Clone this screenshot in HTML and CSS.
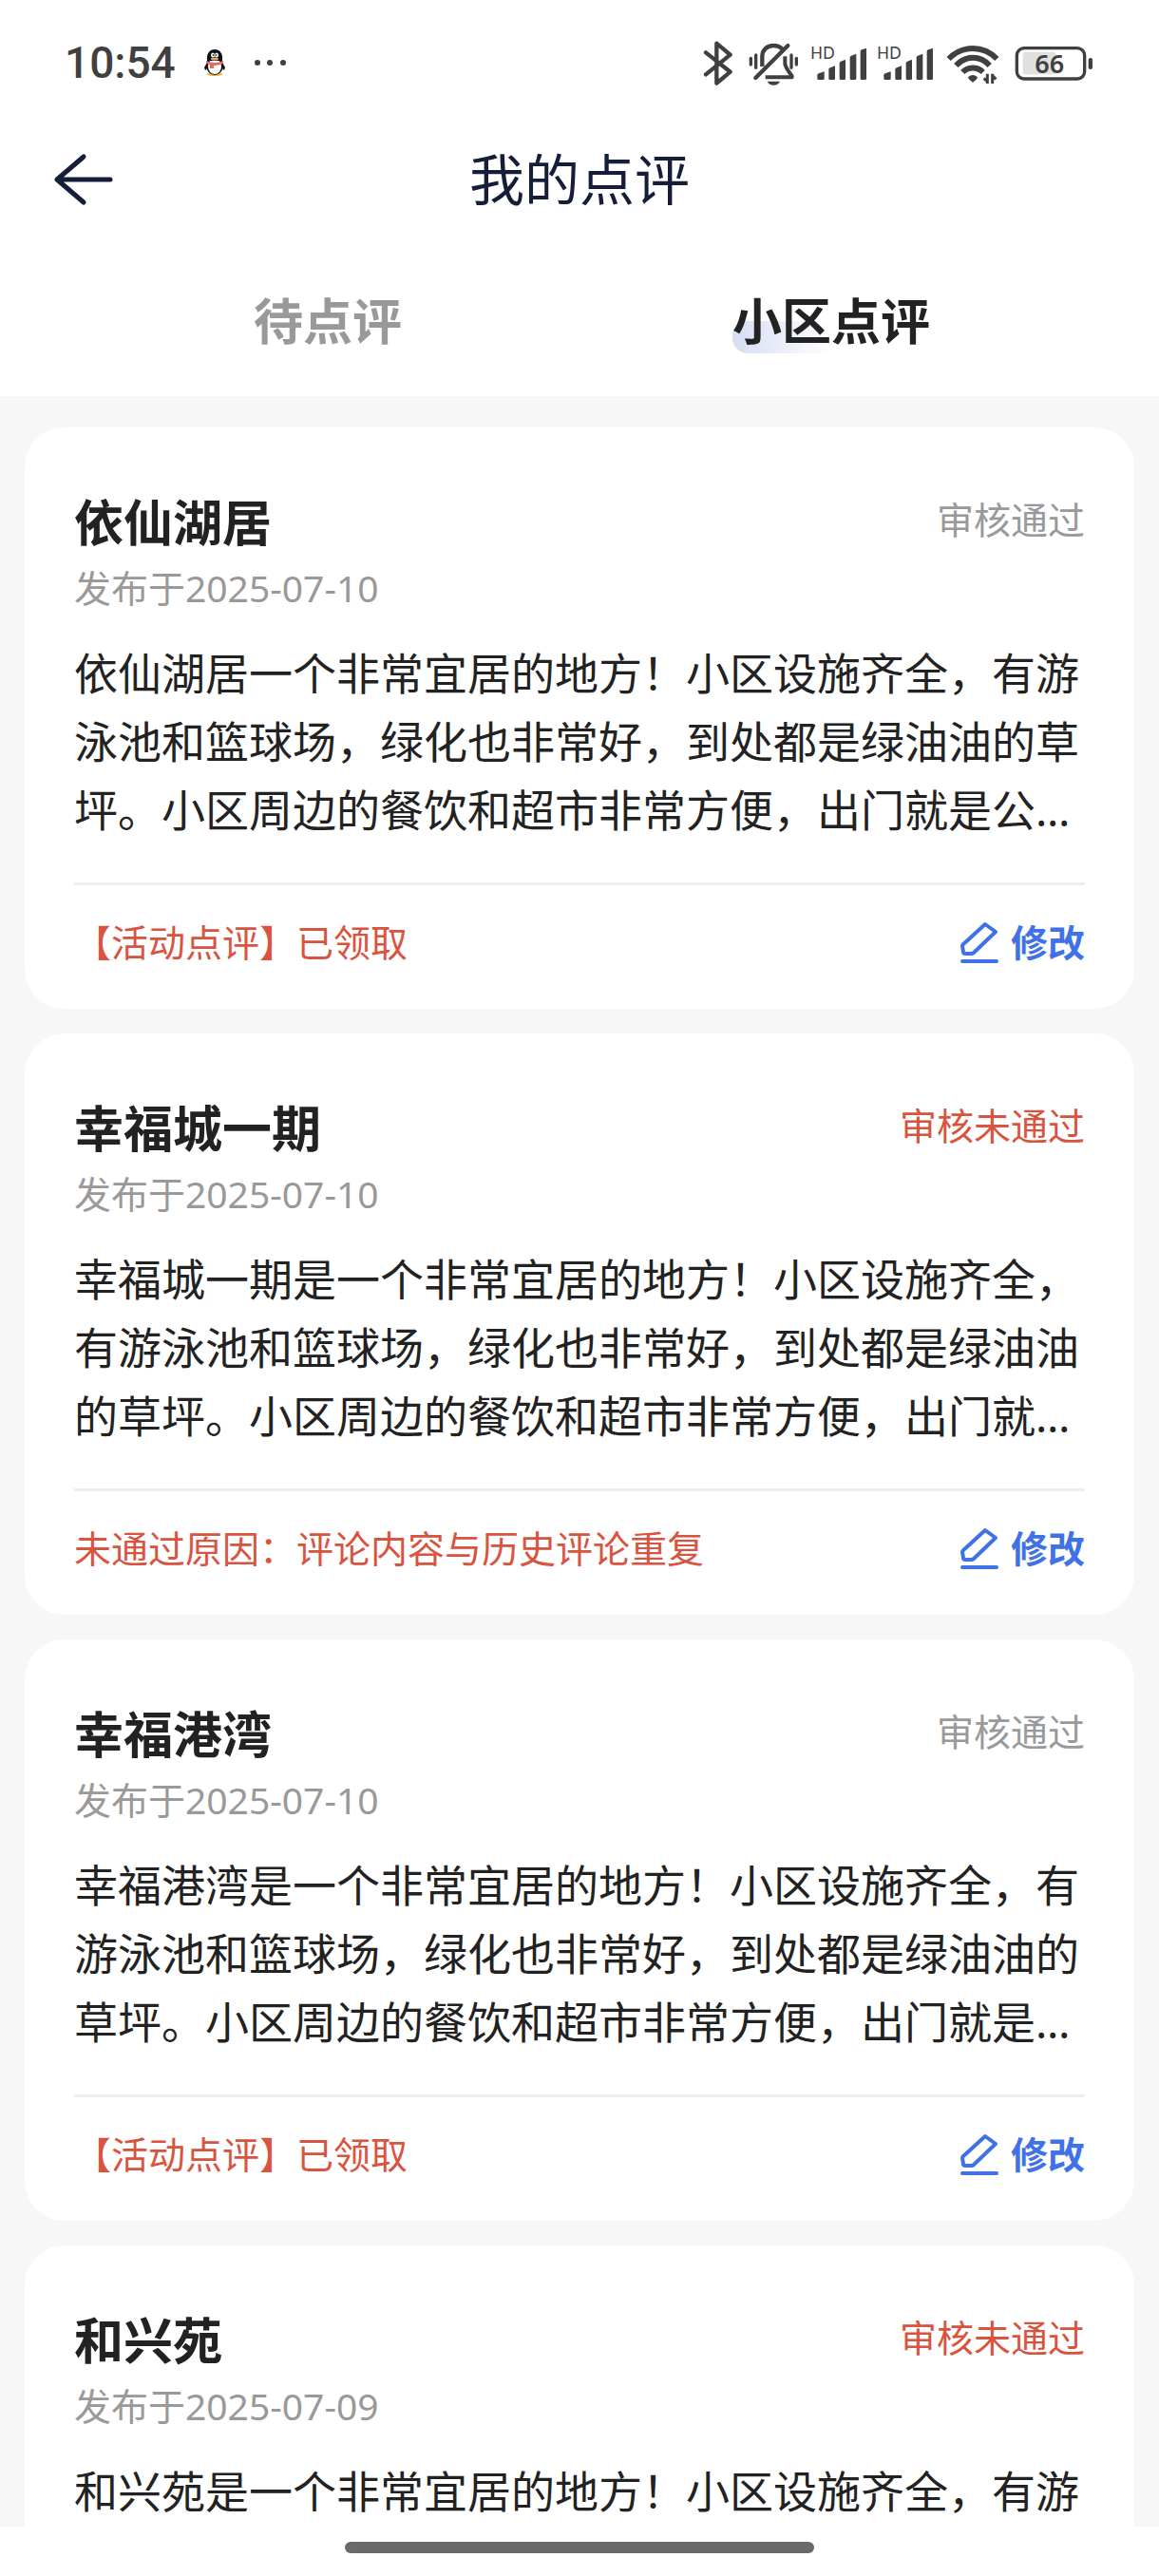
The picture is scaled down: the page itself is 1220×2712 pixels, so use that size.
FILE: index.html
```html
<!DOCTYPE html>
<html lang="zh-CN">
<head>
    <meta charset="UTF-8">
    <meta name="viewport" content="width=device-width, initial-scale=1.0">
    <title>我的点评</title>
    <link rel="stylesheet" href="styles.css">
</head>
<body>
    <svg class="symbols" aria-hidden="true">
        <symbol id="icon-edit" viewBox="0 0 42 46">
            <path d="M27 4 L38 12 L15 34 Q14 35 12 35 H6 Q4 35 4 33 L3 27 Q3 26 4 25 Z"/>
            <path d="M3 43 H39"/>
        </symbol>
        <symbol id="icon-signal" viewBox="404 60 180 156">
            <text x="404" y="126" font-size="53">HD</text>
            <path d="M426 188V178Q426 174 430 172L448 166V188Q448 192 444 192H430Q426 192 426 188Z"/>
            <path d="M462 188V160Q462 156 466 154L482 148V188Q482 192 478 192H466Q462 192 462 188Z"/>
            <path d="M496 188V140Q496 136 500 134L515 128V188Q515 192 511 192H500Q496 192 496 188Z"/>
            <path d="M529 188V122Q529 118 533 116L549 110V188Q549 192 545 192H533Q529 192 529 188Z"/>
            <path d="M562 188V103Q562 99 566 97L581 92V188Q581 192 577 192H566Q562 192 562 188Z"/>
        </symbol>
    </svg>

    <div class="status-bar">
        <div class="status-left">
            <span class="clock">10:54</span>
            <svg class="qq" viewBox="0 0 22 28">
                <ellipse cx="11" cy="26" rx="8" ry="2" fill="#e9b949"/>
                <path d="M4 12 L0 19 L1 22 L4 19 Z M18 12 L22 19 L21 22 L18 19 Z" fill="#111"/>
                <ellipse cx="11" cy="17" rx="9" ry="10" fill="#111"/>
                <ellipse cx="11" cy="18" rx="7" ry="8" fill="#fff"/>
                <path d="M3 12 V8 Q4 0 11 0 Q18 0 19 8 V12 Z" fill="#111"/>
                <ellipse cx="9" cy="6" rx="2" ry="2.5" fill="#fff"/>
                <ellipse cx="13" cy="6" rx="2" ry="2.5" fill="#fff"/>
                <circle cx="9.500" cy="6" r="1"/>
                <circle cx="12.500" cy="6" r="1"/>
                <ellipse cx="11" cy="10" rx="4" ry="1.500" fill="#e9a66b"/>
                <path d="M2 12 Q11 16 20 12 V15 Q15 17 10 17 V20 H6 V16 L2 15 Z" fill="#e8686a"/>
            </svg>
            <svg class="dots" viewBox="0 0 34 8">
                <circle cx="4" cy="4" r="3"/>
                <circle cx="17" cy="4" r="3"/>
                <circle cx="31" cy="4" r="3"/>
            </svg>
        </div>
        <div class="status-right">
            <svg class="line-icon" width="37" height="52" viewBox="66 60 111 156">
                <path d="M75 106 L152 167 L109 203 V77 L152 113 L75 175" stroke-width="13"/>
            </svg>
            <svg class="line-icon" width="56" height="52" viewBox="206 60 168 156">
                <path d="M252 150 V118 C252 98 268 84 287 84 C299 84 309 88 316 95" stroke-width="13" stroke-linecap="butt"/>
                <path d="M324 118 V142 Q326 154 346 180 V184 H262" stroke-width="12" stroke-linecap="butt"/>
                <path d="M333 84 L231 186" stroke-width="13"/>
                <path d="M216 124V144 M232 114V154 M344 114V154 M360 124V144" stroke-width="10"/>
                <path class="solid" d="M268 197 H308 Q302 209 288 209 Q274 209 268 197 Z"/>
            </svg>
            <svg width="60" height="52"><use href="#icon-signal"/></svg>
            <svg width="60" height="52"><use href="#icon-signal"/></svg>
            <svg class="line-icon" width="65" height="52" viewBox="824 60 195 156">
                <g stroke-linecap="butt" stroke-width="18">
                    <path d="M841 126 C883 82 951 82 993 126"/>
                    <path d="M864 147 C893 114 941 114 970 147"/>
                    <path d="M885 168 C902 150 932 150 949 168"/>
                </g>
                <path class="solid" d="M902 184 Q917 170 932 184 Q930 193 917 200 Q904 193 902 184 Z"/>
                <g stroke-width="9" stroke-linecap="butt">
                    <path d="M963 173 V204 M952 187 L963 198"/>
                    <path d="M979 204 V173 M979 179 L990 190"/>
                </g>
            </svg>
            <svg width="84" height="52" viewBox="1048 60 252 156">
                <rect x="1074" y="104" width="104" height="71" rx="8" fill="#e0e0e0"/>
                <rect x="1055" y="92" width="214" height="97" rx="23" fill="none" stroke="#404040" stroke-width="10"/>
                <rect x="1281" y="123" width="13" height="36" rx="6"/>
                <text x="1112" y="170" font-size="81">66</text>
            </svg>
        </div>
    </div>

    <header class="nav-bar">
        <button type="button" class="back" aria-label="返回">
            <svg width="64" height="56" viewBox="0 0 64 56">
                <path d="M32 4 L4 28 L32 52 M4 28 H60"/>
            </svg>
        </button>
        <h1>我的点评</h1>
    </header>

    <nav class="tabs">
        <button type="button" class="tab">待点评</button>
        <button type="button" class="tab active">小区点评</button>
    </nav>

    <main class="review-list">
        <article class="card">
            <div class="card-head">
                <h2>依仙湖居</h2>
                <span class="state">审核通过</span>
            </div>
            <p class="date">发布于2025-07-10</p>
            <p class="content">依仙湖居一个非常宜居的地方！小区设施齐全，有游泳池和篮球场，绿化也非常好，到处都是绿油油的草坪。小区周边的餐饮和超市非常方便，出门就是公…</p>
            <div class="card-foot">
                <span class="note">【活动点评】已领取</span>
                <button type="button" class="edit"><svg><use href="#icon-edit"/></svg>修改</button>
            </div>
        </article>

        <article class="card">
            <div class="card-head">
                <h2>幸福城一期</h2>
                <span class="state rejected">审核未通过</span>
            </div>
            <p class="date">发布于2025-07-10</p>
            <p class="content">幸福城一期是一个非常宜居的地方！小区设施齐全，有游泳池和篮球场，绿化也非常好，到处都是绿油油的草坪。小区周边的餐饮和超市非常方便，出门就…</p>
            <div class="card-foot">
                <span class="note">未通过原因：评论内容与历史评论重复</span>
                <button type="button" class="edit"><svg><use href="#icon-edit"/></svg>修改</button>
            </div>
        </article>

        <article class="card">
            <div class="card-head">
                <h2>幸福港湾</h2>
                <span class="state">审核通过</span>
            </div>
            <p class="date">发布于2025-07-10</p>
            <p class="content">幸福港湾是一个非常宜居的地方！小区设施齐全，有游泳池和篮球场，绿化也非常好，到处都是绿油油的草坪。小区周边的餐饮和超市非常方便，出门就是…</p>
            <div class="card-foot">
                <span class="note">【活动点评】已领取</span>
                <button type="button" class="edit"><svg><use href="#icon-edit"/></svg>修改</button>
            </div>
        </article>

        <article class="card">
            <div class="card-head">
                <h2>和兴苑</h2>
                <span class="state rejected">审核未通过</span>
            </div>
            <p class="date">发布于2025-07-09</p>
            <p class="content">和兴苑是一个非常宜居的地方！小区设施齐全，有游</p>
        </article>
    </main>

    <div class="home-bar"><span></span></div>
</body>
</html>
```

FILE: styles.css
```css
* {
    box-sizing: border-box;
}
body {
    margin: 0;
    height: 100vh;
    display: flex;
    flex-direction: column;
    font-family: "Noto Sans", "Noto Sans CJK SC", sans-serif;
    font-size: 39px;
    color: #222;
    background-color: #fff;
    text-spacing-trim: space-all;
}
h1, h2, p {
    margin: 0;
}
button {
    padding: 0;
    border: none;
    background: none;
    font-family: inherit;
    cursor: pointer;
}
svg {
    display: block;
}
.symbols {
    position: absolute;
    width: 0;
    height: 0;
}

/* status bar */
.status-bar {
    flex: none;
    height: 132px;
    padding: 0 68px;
    display: flex;
    justify-content: space-between;
    align-items: center;
    color: #404040;
}
.status-left, .status-right {
    display: flex;
    align-items: center;
}
.status-left {
    gap: 30px;
}
.status-right {
    gap: 10px;
}
.status-bar svg {
    fill: #404040;
}
.status-bar text {
    font-weight: 600;
}
.clock {
    font-family: Roboto, sans-serif;
    font-size: 46px;
    line-height: 60px;
    font-weight: 500;
}
.qq {
    width: 22px;
    height: 28px;
}
.dots {
    width: 34px;
    height: 8px;
}
.status-bar .line-icon {
    fill: none;
    stroke: #404040;
    stroke-linecap: round;
    stroke-linejoin: round;
}
.line-icon .solid {
    fill: #404040;
    stroke: none;
}

/* title and tabs */
.nav-bar {
    flex: none;
    height: 114px;
    position: relative;
    display: flex;
    justify-content: center;
    align-items: center;
}
.nav-bar h1 {
    font-size: 58px;
    line-height: 72px;
    font-weight: 400;
    color: #141e38;
}
.back {
    position: absolute;
    left: 56px;
}
.back path {
    fill: none;
    stroke: #141e38;
    stroke-width: 5;
    stroke-linecap: round;
    stroke-linejoin: round;
}
.tabs {
    flex: none;
    display: grid;
    grid-template-columns: 1fr 1fr;
    justify-items: center;
    padding: 56px 80px 43px;
}
.tab {
    position: relative;
    z-index: 0;
    font-size: 52px;
    line-height: 72px;
    font-weight: 700;
    color: #999;
}
.tab.active {
    color: #222;
}
.tab.active::before {
    content: "";
    position: absolute;
    z-index: -1;
    left: 0;
    bottom: 2px;
    width: 50%;
    height: 34px;
    border-radius: 16px 0 0 16px;
    background: linear-gradient(to right, #d6ddf3, #fff);
}

/* review cards */
.review-list {
    flex: 1;
    min-height: 0;
    overflow: hidden;
    padding: 33px 26px 0;
    background-color: #f7f7f7;
}
.card {
    margin-bottom: 26px;
    padding: 64px 52px 40px;
    border-radius: 42px;
    background-color: #fff;
}
.card-head {
    display: flex;
    justify-content: space-between;
}
.card-head h2 {
    font-size: 52px;
    line-height: 72px;
    font-weight: 700;
}
.state {
    line-height: 66px;
    color: #999;
}
.state.rejected {
    color: #d9543f;
}
.date {
    margin-top: 4px;
    line-height: 58px;
    color: #999;
}
.content {
    margin-top: 24px;
    font-size: 46px;
    line-height: 72px;
}
.card-foot {
    display: flex;
    justify-content: space-between;
    align-items: center;
    margin-top: 41px;
    padding-top: 30px;
    border-top: 3px solid #eee;
    line-height: 60px;
}
.note {
    color: #d9543f;
}
.edit {
    display: flex;
    align-items: center;
    gap: 12px;
    font-size: 39px;
    line-height: 60px;
    font-weight: 700;
    color: #3f72e6;
}
.edit svg {
    width: 42px;
    height: 46px;
    fill: none;
    stroke: #3f72e6;
    stroke-width: 4;
    stroke-linecap: round;
    stroke-linejoin: round;
}

/* system gesture bar */
.home-bar {
    flex: none;
    height: 52px;
    padding-top: 16px;
}
.home-bar span {
    display: block;
    width: 494px;
    height: 12px;
    margin: 0 auto;
    border-radius: 6px;
    background-color: #6a6a6a;
}
```
